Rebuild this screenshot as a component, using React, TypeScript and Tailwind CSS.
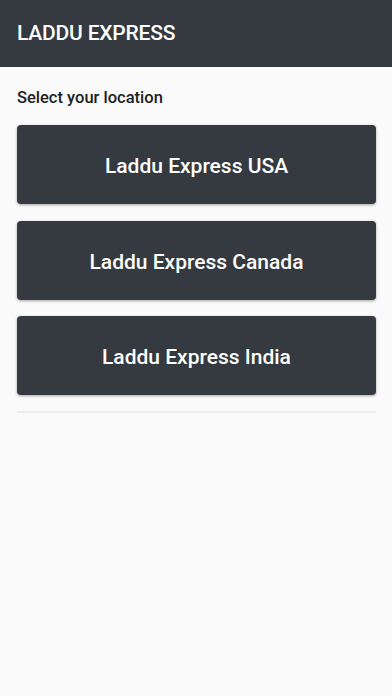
const locations = ["Laddu Express USA", "Laddu Express Canada", "Laddu Express India"];

export default function App() {
  return (
    <div className="min-h-[696px] bg-[#fafafa] font-['Roboto',sans-serif]">
      <header className="h-[67px] bg-[#343a40] flex items-center px-[17px]">
        <h1 className="text-white text-[21px] font-medium tracking-[-0.2px] pt-[1px]">LADDU EXPRESS</h1>
      </header>
      <main className="pl-[17px] pr-[16px] pt-[20px]">
        <p className="text-[16.5px] font-medium text-[#212121] leading-[22px]">Select your location</p>
        <div className="mt-[16px] flex flex-col gap-[16.5px]">
          {locations.map((name) => (
            <button
              key={name}
              className="h-[79px] w-full rounded-[4px] bg-[#343a40] pt-[5px] text-white text-[21px] font-medium shadow-[0_1px_3px_rgba(0,0,0,0.35)]"
            >
              {name}
            </button>
          ))}
        </div>
        <div className="mt-[16px] h-[2px] bg-[#eeeeee]" />
      </main>
    </div>
  );
}
